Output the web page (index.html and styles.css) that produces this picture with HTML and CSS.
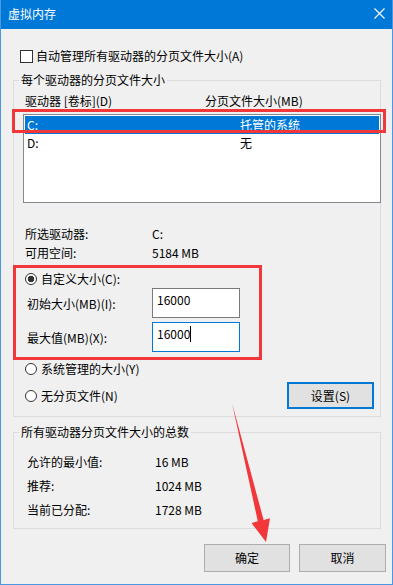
FILE: index.html
```html
<!DOCTYPE html>
<html lang="zh-CN">
<head>
<meta charset="utf-8">
<title>虚拟内存</title>
<link rel="stylesheet" href="styles.css">
</head>
<body>
<div class="window">
  <div class="titlebar">
    <span class="title">虚拟内存</span>
    <svg class="close" width="11" height="11" viewBox="0 0 11 11"><path d="M0.5 0.5L10.5 10.5M10.5 0.5L0.5 10.5" stroke="#fff" stroke-width="1.1" fill="none"/></svg>
  </div>
  <div class="content">
    <div class="check-row"><span class="checkbox"></span><span>自动管理所有驱动器的分页文件大小(A)</span></div>
    <div class="group g1">
      <div class="group-title">每个驱动器的分页文件大小</div>
      <div class="list-head"><span>驱动器 [卷标](D)</span><span>分页文件大小(MB)</span></div>
      <div class="listbox">
        <div class="row selected"><span>C:</span><span>托管的系统</span></div>
        <div class="row"><span>D:</span><span>无</span></div>
      </div>
      <div class="info">
        <span>所选驱动器:</span><span>C:</span>
        <span>可用空间:</span><span>5184 MB</span>
      </div>
      <div class="radio-row r-custom"><span class="radio on"></span><span>自定义大小(C):</span></div>
      <div class="field"><span class="field-label">初始大小(MB)(I):</span><div class="input">16000</div></div>
      <div class="field f2"><span class="field-label">最大值(MB)(X):</span><div class="input focus">16000<span class="caret"></span></div></div>
      <div class="radio-row r-sys"><span class="radio"></span><span>系统管理的大小(Y)</span></div>
      <div class="split-row">
        <div class="radio-row"><span class="radio"></span><span>无分页文件(N)</span></div>
        <button class="btn btn-set">设置(S)</button>
      </div>
    </div>
    <div class="group g2">
      <div class="group-title">所有驱动器分页文件大小的总数</div>
      <div class="totals">
        <span>允许的最小值:</span><span>16 MB</span>
        <span>推荐:</span><span>1024 MB</span>
        <span>当前已分配:</span><span>1728 MB</span>
      </div>
    </div>
    <div class="actions">
      <button class="btn btn-ok">确定</button>
      <button class="btn btn-cancel">取消</button>
    </div>
  </div>
  <div class="anno anno-row"></div>
  <div class="anno anno-custom"></div>
  <svg class="arrow" width="393" height="585" viewBox="0 0 393 585">
    <polygon points="232,403 263.6,519.9 270,518.2 266,542 251.5,523 257.8,521.3" fill="#f2373b"/>
  </svg>
</div>
</body>
</html>
```

FILE: styles.css
```css
* { box-sizing: border-box; }
html, body { margin: 0; padding: 0; }
body {
  font-family: "Noto Sans CJK SC", "Noto Sans", sans-serif;
  font-size: 12px;
  color: #000;
  background: #f0f0f0;
}
.window {
  position: relative;
  width: 393px;
  height: 585px;
  border: 1px solid #4a97e3;
  border-top: none;
  background: #f0f0f0;
  display: flex;
  flex-direction: column;
  overflow: hidden;
}
.titlebar {
  height: 29px;
  flex: none;
  background: #0078d7;
  color: #fff;
  display: flex;
  align-items: center;
  justify-content: space-between;
  padding: 0 7px 1px 7px;
  line-height: 16px;
}
.close { display: block; margin-top: -2px; }
.content { padding: 0 11px 0 12px; }
.check-row {
  display: flex;
  align-items: center;
  margin: 19px 0 0 7px;
  height: 16px;
  line-height: 16px;
}
.checkbox {
  width: 13px;
  height: 13px;
  border: 1px solid #333;
  background: #fff;
  margin-right: 3px;
  flex: none;
}
.group { border: 1px solid #dcdcdc; }
.g1 { margin-top: 16px; padding-bottom: 7px; }
.g2 { margin-top: 15px; padding-bottom: 6px; }
.group-title {
  width: max-content;
  margin: -9px 0 0 5px;
  padding: 0 2px;
  background: #f0f0f0;
  line-height: 16px;
  height: 16px;
}
.list-head {
  display: grid;
  grid-template-columns: 180px 1fr;
  margin-top: 5px;
  padding-left: 11px;
  line-height: 16px;
}
.listbox {
  margin: 5px -1px 0 9px;
  height: 89px;
  border: 1px solid #828790;
  background: #fff;
  padding: 1px;
}
.row {
  display: grid;
  grid-template-columns: 213px 1fr;
  height: 18px;
  line-height: 18px;
  padding-left: 2px;
}
.selected { background: #0078d7; color: #fff; }
.info {
  display: grid;
  grid-template-columns: 127px 1fr;
  margin-top: 21px;
  padding-left: 11px;
  line-height: 19px;
}
.radio-row {
  display: flex;
  align-items: center;
  height: 18px;
  line-height: 18px;
  padding-left: 11px;
}
.r-custom { margin-top: 8px; }
.r-sys { margin-top: 8px; }
.radio {
  width: 12px;
  height: 12px;
  flex: none;
  border: 1px solid #333;
  border-radius: 50%;
  background: #fff;
  margin-right: 4px;
}
.radio.on { background: radial-gradient(circle, #333 0 3px, #fff 3.6px); }
.field {
  display: flex;
  align-items: center;
  padding-left: 13px;
}
.f2 { margin-top: 4px; }
.field-label { width: 125px; flex: none; }
.input {
  width: 88px;
  height: 30px;
  border: 1px solid #7a7a7a;
  background: #fff;
  padding: 2px 4px;
  line-height: 18px;
}
.input.focus { border-color: #0078d7; }
.caret {
  display: inline-block;
  width: 1px;
  height: 16px;
  background: #000;
  vertical-align: top;
  margin-top: 1px;
}
.split-row {
  display: flex;
  justify-content: space-between;
  align-items: center;
  margin-top: 4px;
  padding-right: 6px;
}
.split-row .radio-row { padding-left: 11px; }
.btn {
  font: inherit;
  color: #000;
  background: #e1e1e1;
  border: 1px solid #adadad;
  padding: 0;
  margin: 0;
  line-height: 16px;
}
.btn-set { width: 87px; height: 27px; border: 2px solid #0078d7; }
.totals {
  display: grid;
  grid-template-columns: 128px 1fr;
  margin-top: 10px;
  padding-left: 13px;
  line-height: 24px;
}
.actions {
  display: flex;
  justify-content: flex-end;
  gap: 9px;
  margin: 15px -5px 0 0;
}
.btn-ok { width: 86px; height: 28px; }
.btn-cancel { width: 87px; height: 28px; }
.anno {
  position: absolute;
  border: 3px solid #f2373b;
  pointer-events: none;
}
.anno-row { left: 11px; top: 109px; width: 374px; height: 24px; }
.anno-custom { left: 12px; top: 265px; width: 249px; height: 95px; }
.arrow { position: absolute; left: -1px; top: 0; pointer-events: none; }
```
